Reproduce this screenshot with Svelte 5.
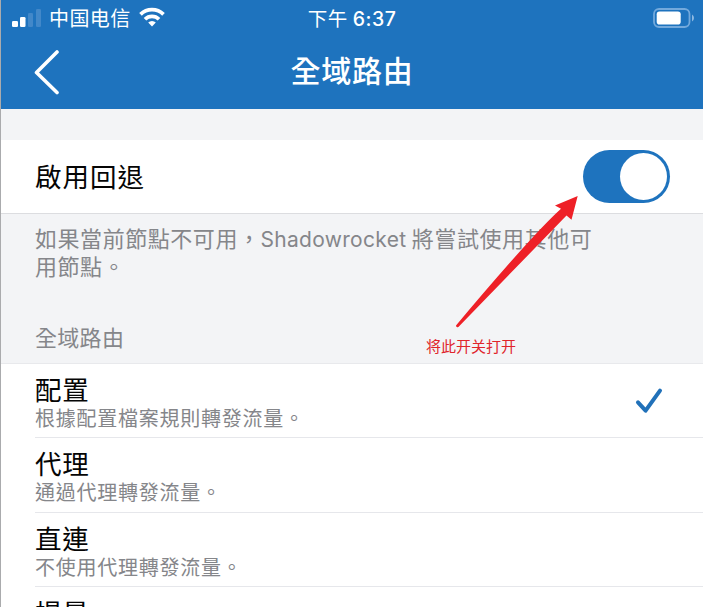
<script>
  const routes = [
    { title: '配置', detail: '根據配置檔案規則轉發流量。', selected: true },
    { title: '代理', detail: '通過代理轉發流量。' },
    { title: '直連', detail: '不使用代理轉發流量。' },
    { title: '場景', detail: '' }
  ];
</script>

<div class="screen">
  <header>
    <div class="status">
      <div class="carrier">
        <svg class="signal" width="29" height="20" viewBox="0 0 29 20">
          <rect x="0" y="13" width="6" height="6" rx="1.3" fill="#fff" />
          <rect x="8" y="9" width="5.5" height="10" rx="1.3" fill="#fff" />
          <rect x="16" y="5" width="5" height="14" rx="1.3" fill="#4288c9" />
          <rect x="24" y="1" width="5" height="18" rx="1.3" fill="#4288c9" />
        </svg>
        <span class="name">中国电信</span>
        <svg class="wifi" width="26" height="20" viewBox="0 0 26 20">
          <g fill="none" stroke="#fff" stroke-width="3.7">
            <path d="M1.5 7.4a16.4 16.4 0 0 1 23 0" />
            <path d="M6 12.2a10 10 0 0 1 14 0" />
          </g>
          <path d="M9.2 15.6a5.4 5.4 0 0 1 7.6 0L13 19.5z" fill="#fff" />
        </svg>
      </div>
      <div class="time">下午 <b>6:37</b></div>
      <div class="power">
        <svg width="42" height="20" viewBox="0 0 42 20">
          <rect x="1" y="1" width="35.5" height="18" rx="5" fill="none" stroke="#73a9dc" stroke-width="1.8" />
          <rect x="3.7" y="3.4" width="24" height="13.2" rx="2.8" fill="#fff" />
          <path d="M39 6.5q2 1 2 3.5t-2 3.5z" fill="#8eb9e2" />
        </svg>
      </div>
    </div>
    <div class="nav">
      <svg width="26" height="46" viewBox="0 0 26 46">
        <path d="M23 3L2.5 23.5 23 43.5" fill="none" stroke="#fff" stroke-width="3.6" stroke-linecap="round" stroke-linejoin="round" />
      </svg>
      <h1>全域路由</h1>
    </div>
  </header>

  <section class="fallback">
    <span class="caption">啟用回退</span>
    <div class="switch"><i></i></div>
  </section>
  <div class="info">
    <p>如果當前節點不可用，<span class="latin">Shadowrocket</span> 將嘗試使用其他可<br />用節點。</p>
    <h2>全域路由</h2>
  </div>

  <ul>
    {#each routes as route}
      <li>
        <div class="label">
          <strong>{route.title}</strong>
          {#if route.detail}<small>{route.detail}</small>{/if}
        </div>
        {#if route.selected}
          <svg class="check" width="28" height="28" viewBox="0 0 28 28">
            <path d="M3 15.3L10.6 23.7 25 3.7" fill="none" stroke="#2171b9" stroke-width="4" stroke-linecap="round" stroke-linejoin="round" />
          </svg>
        {/if}
      </li>
    {/each}
  </ul>

  <div class="note">
    <svg width="126" height="136" viewBox="0 0 126 136">
      <path d="M123.7 1L101 10.5 107 13.8Q78 40 2 130.4Q2 132.8 4.4 132L112.5 20.5 117.5 24.8z" fill="#ee2027" />
    </svg>
    <span>将此开关打开</span>
  </div>
</div>

<style>
  :global(body) { margin: 0; }
  .screen {
    position: relative;
    box-sizing: border-box;
    width: 703px;
    height: 607px;
    overflow: hidden;
    border-left: 1px solid #aaabad;
    background: #f3f4f6;
    color: #050505;
    font-family: "Noto Sans CJK TC", sans-serif;
  }
  header {
    height: 109px;
    background: #1e73be;
    color: #fff;
  }
  .status {
    display: grid;
    grid-template-columns: 1fr auto 1fr;
    align-items: center;
    height: 35px;
    padding: 0 8px 0 11px;
  }
  .carrier { display: flex; align-items: center; }
  .name {
    margin-left: 8px;
    font: 20px/28px "Noto Sans CJK SC", sans-serif;
    letter-spacing: 0.4px;
  }
  .wifi { margin: 0 0 2px 8px; }
  .time {
    margin-right: 3px;
    font-size: 19.5px;
    line-height: 28px;
    letter-spacing: 0.6px;
  }
  .time b { font: 500 19.5px Inter, sans-serif; letter-spacing: 0.5px; }
  .power { display: flex; justify-content: flex-end; }
  .nav {
    display: grid;
    grid-template-columns: 1fr auto 1fr;
    align-items: center;
    height: 74px;
    padding: 0 33px;
  }
  h1 {
    margin: 0 0 6px;
    font-size: 30px;
    font-weight: 500;
    line-height: 44px;
    letter-spacing: 0.8px;
  }
  .fallback {
    display: flex;
    align-items: center;
    justify-content: space-between;
    box-sizing: border-box;
    height: 74px;
    margin-top: 31px;
    padding: 0 33px 0 34px;
    border-bottom: 1px solid #dcdde0;
    background: #fff;
    font-size: 26.5px;
    letter-spacing: 1px;
  }
  .caption { margin-bottom: 3px; }
  .switch {
    display: flex;
    justify-content: flex-end;
    box-sizing: border-box;
    width: 87px;
    height: 53px;
    padding: 3px;
    border-radius: 27px;
    background: #1e73be;
  }
  .switch i {
    width: 47px;
    height: 47px;
    border-radius: 50%;
    background: #fff;
  }
  .info {
    box-sizing: border-box;
    height: 150px;
    padding: 10px 34px 0;
    border-bottom: 1px solid #e8e9ec;
    color: #85868a;
  }
  p {
    margin: 0;
    font-size: 22px;
    line-height: 27px;
    letter-spacing: 0.55px;
    white-space: nowrap;
  }
  .latin { font: 21px Inter, sans-serif; letter-spacing: 0.3px; }
  h2 {
    margin: 41px 0 0;
    font-size: 22px;
    font-weight: 400;
    line-height: 32px;
    letter-spacing: 0.3px;
  }
  ul {
    margin: 0;
    padding: 0 0 0 34px;
    background: #fff;
    list-style: none;
  }
  li {
    display: flex;
    justify-content: space-between;
    box-sizing: border-box;
    height: 74.7px;
    border-bottom: 1px solid #e6e7eb;
  }
  li:first-child { height: 74px; }
  .label { display: flex; flex-direction: column; padding-top: 8px; }
  strong {
    font-size: 26.5px;
    font-weight: 400;
    line-height: 33px;
    letter-spacing: 0.7px;
  }
  small {
    margin-top: 1px;
    color: #85868a;
    font-size: 20px;
    line-height: 24px;
    letter-spacing: 0.75px;
  }
  .check { margin: 23px 40px 0 0; }
  .note {
    position: absolute;
    left: 425px;
    top: 195px;
    display: flex;
    flex-direction: column;
    color: #e0252b;
    font: 15px/22px "Noto Sans CJK SC", sans-serif;
  }
  .note svg { margin-left: 28px; }
  .note span { margin-top: 4px; }
</style>
